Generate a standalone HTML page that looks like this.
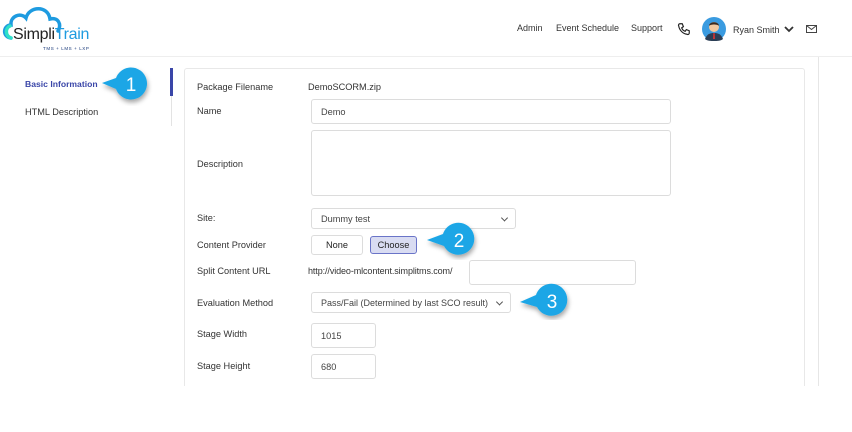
<!DOCTYPE html>
<html><head><meta charset="utf-8"><style>
*{box-sizing:border-box;margin:0;padding:0}
body{width:852px;height:432px;background:#fff;font-family:"Liberation Sans",sans-serif;position:relative;overflow:hidden;color:#333}
.a{position:absolute}
.t{position:absolute;font-size:9.2px;color:#333;white-space:nowrap}
.in{position:absolute;border:1px solid #dcdcdc;border-radius:3px;background:#fff;font-size:9.2px;color:#444;padding-left:9px;display:flex;align-items:center}
.sel::after{content:"";position:absolute;right:8px;top:50%;width:4px;height:4px;border-right:1.2px solid #555;border-bottom:1.2px solid #555;transform:translateY(-70%) rotate(45deg)}
</style></head><body>
<svg class="a" style="left:2px;top:4px" width="95" height="44" viewBox="0 0 95 44">
<path d="M9 34 C0 33 1 21 9 21 C8 12 19 8 24 14 C27 2 46 1 48 15 C56 13 60 20 56 27" fill="none" stroke="#1e9be0" stroke-width="3.5" stroke-linecap="round"/>
<path d="M9 34 C3 32 3 24 8 22" fill="none" stroke="#2ee0c8" stroke-width="3.5" stroke-linecap="round"/>
</svg>
<div class="t" style="left:13px;top:26px;font-size:16px;color:#222;letter-spacing:-0.3px">Simpli<span style="color:#1e9be0">Train</span></div>
<div class="t" style="left:43px;top:46px;font-size:4.5px;color:#1a3a7a;letter-spacing:0.6px">TMS + LMS + LXP</div>
<div class="t" style="left:517px;top:23px;font-size:9px">Admin</div>
<div class="t" style="left:556px;top:23px;font-size:9px">Event Schedule</div>
<div class="t" style="left:631px;top:23px;font-size:9px">Support</div>
<svg class="a" style="left:677px;top:22px" width="14" height="14" viewBox="0 0 24 24"><path d="M5 3l4 0 2 5-3 2c1 3 3 5 6 6l2-3 5 2 0 4c0 2-2 3-4 2C10 20 4 14 3 7 2 5 3 3 5 3z" fill="none" stroke="#222" stroke-width="2"/></svg>
<svg class="a" style="left:702px;top:17px" width="24" height="24" viewBox="0 0 24 24"><circle cx="12" cy="12" r="12" fill="#3a9be0"/><path d="M3 22c2-5 5-6 9-6s7 1 9 6c-2 2-6 2-9 2s-7 0-9-2z" fill="#2b3e55"/><circle cx="12" cy="10" r="5" fill="#f2c9a0"/><path d="M7 9c0-5 10-5 10 0c-1-2-9-2-10 0z" fill="#3a2a20"/><path d="M11.3 16h1.4l.3 6h-2z" fill="#c33"/></svg>
<div class="t" style="left:733px;top:25px;font-size:9px">Ryan Smith</div>
<svg class="a" style="left:784px;top:26px" width="10" height="7" viewBox="0 0 10 7"><path d="M1 1l4 4 4-4" fill="none" stroke="#333" stroke-width="1.8"/></svg>
<svg class="a" style="left:806px;top:25px" width="11" height="8" viewBox="0 0 11 8"><rect x=".5" y=".5" width="10" height="7" fill="none" stroke="#444"/><path d="M.5 .5l5 4 5-4" fill="none" stroke="#444"/></svg>
<div class="a" style="left:0;top:56px;width:852px;height:1px;background:#eee"></div>
<div class="a" style="left:818px;top:57px;width:1px;height:329px;background:#e6e6e6"></div>
<div class="t" style="left:25px;top:79px;color:#3a46a8;font-weight:bold;font-size:8.6px">Basic Information</div>
<div class="t" style="left:25px;top:107px">HTML Description</div>
<div class="a" style="left:171px;top:68px;width:1px;height:58px;background:#e3e3e3"></div>
<div class="a" style="left:170px;top:68px;width:3px;height:28px;background:#3a46a8"></div>
<div class="a" style="left:184px;top:68px;width:621px;height:330px;border:1px solid #e8e8e8;border-radius:3px"></div>
<div class="a" style="left:0;top:386px;width:852px;height:46px;background:#fff"></div>
<div class="t" style="left:197px;top:82px">Package Filename</div>
<div class="t" style="left:308px;top:82px">DemoSCORM.zip</div>
<div class="t" style="left:197px;top:106px">Name</div>
<div class="in" style="left:311px;top:99px;width:360px;height:25px">Demo</div>
<div class="t" style="left:197px;top:159px">Description</div>
<div class="in" style="left:311px;top:130px;width:360px;height:66px"></div>
<div class="t" style="left:197px;top:213px">Site:</div>
<div class="in sel" style="left:311px;top:208px;width:205px;height:21px">Dummy test</div>
<div class="t" style="left:197px;top:240px">Content Provider</div>
<div class="in" style="left:311px;top:235px;width:52px;height:20px;justify-content:center;padding:0;color:#222">None</div>
<div class="in" style="left:370px;top:236px;width:47px;height:18px;justify-content:center;padding:0;background:#d9dcf2;border-color:#6a74c8;color:#222">Choose</div>
<div class="t" style="left:197px;top:266px">Split Content URL</div>
<div class="t" style="left:308px;top:266px;font-size:9px;letter-spacing:-0.1px">http://video-mlcontent.simplitms.com/</div>
<div class="in" style="left:469px;top:260px;width:167px;height:25px"></div>
<div class="t" style="left:197px;top:298px">Evaluation Method</div>
<div class="in sel" style="left:311px;top:292px;width:200px;height:21px;font-size:9px">Pass/Fail (Determined by last SCO result)</div>
<div class="t" style="left:197px;top:329px">Stage Width</div>
<div class="in" style="left:311px;top:323px;width:65px;height:25px">1015</div>
<div class="t" style="left:197px;top:361px">Stage Height</div>
<div class="in" style="left:311px;top:354px;width:65px;height:25px">680</div>
<svg class="a" style="left:96px;top:62px" width="60" height="44"><defs><filter id="s" x="-50%" y="-50%" width="200%" height="200%"><feDropShadow dx="1" dy="3" stdDeviation="2.5" flood-opacity=".35"/></filter></defs><path d="M6 21 L20 16 A16 16 0 1 1 20 27 Z" fill="#1aa6e6" filter="url(#s)"/><text x="35" y="29" font-size="19" fill="#fff" text-anchor="middle" font-family="Liberation Sans">1</text></svg>
<svg class="a" style="left:422px;top:216px" width="60" height="44"><path d="M5 24 L21 18 A16 16 0 1 1 22 30 Z" fill="#1aa6e6" filter="url(#s)"/><text x="37" y="31" font-size="19" fill="#fff" text-anchor="middle" font-family="Liberation Sans">2</text></svg>
<svg class="a" style="left:515px;top:276px" width="60" height="44"><path d="M5 26 L21 19 A16 16 0 1 1 22 31 Z" fill="#1aa6e6" filter="url(#s)"/><text x="37" y="32" font-size="19" fill="#fff" text-anchor="middle" font-family="Liberation Sans">3</text></svg>
</body></html>
